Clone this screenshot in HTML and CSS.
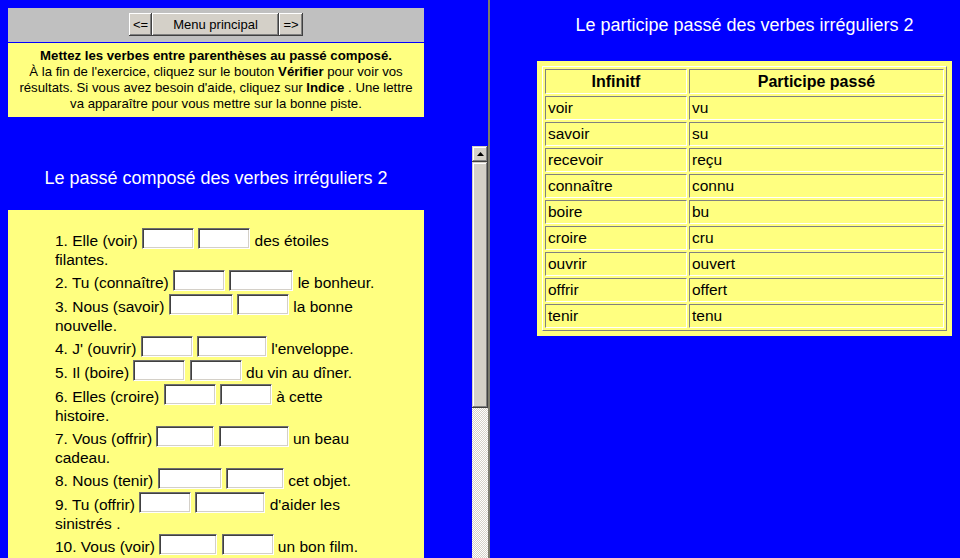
FILE: index.html
```html
<!DOCTYPE html>
<html lang="fr">
<head>
<meta charset="utf-8">
<title>Le passé composé des verbes irréguliers 2</title>
<link rel="stylesheet" href="styles.css">
</head>
<body>
<div class="frames">
  <div class="left">
    <div class="top-frame">
      <div class="nav">
        <button class="btn b-prev">&lt;=</button><button class="btn b-menu">Menu principal</button><button class="btn b-next">=&gt;</button>
      </div>
      <div class="consigne">
        <b>Mettez les verbes entre parenthèses au passé composé.</b><br>
        À la fin de l'exercice, cliquez sur le bouton <b>Vérifier</b> pour voir vos<br>
        résultats. Si vous avez besoin d'aide, cliquez sur <b>Indice</b> . Une lettre<br>
        va apparaître pour vous mettre sur la bonne piste.
      </div>
    </div>
    <div class="bottom-frame">
      <div class="exercise">
        <h1 class="title">Le passé composé des verbes irréguliers 2</h1>
        <div class="card">
          <p class="item">1. Elle (voir) <input class="w52"> <input class="w52"> des étoiles<br>filantes.</p>
          <p class="item">2. Tu (connaître) <input class="w52"> <input class="w64"> le bonheur.</p>
          <p class="item">3. Nous (savoir) <input class="w64"> <input class="w52"> la bonne<br>nouvelle.</p>
          <p class="item">4. J' (ouvrir) <input class="w52"> <input class="w70"> l'enveloppe.</p>
          <p class="item">5. Il (boire) <input class="w52"> <input class="w52"> du vin au dîner.</p>
          <p class="item">6. Elles (croire) <input class="w52"> <input class="w52"> à cette<br>histoire.</p>
          <p class="item">7. Vous (offrir) <input class="w58"> <input class="w70"> un beau<br>cadeau.</p>
          <p class="item">8. Nous (tenir) <input class="w64"> <input class="w58"> cet objet.</p>
          <p class="item">9. Tu (offrir) <input class="w52"> <input class="w70"> d'aider les<br>sinistrés .</p>
          <p class="item">10. Vous (voir) <input class="w58"> <input class="w52"> un bon film.</p>
        </div>
      </div>
      <div class="scrollbar">
        <div class="sb-btn"><svg width="7" height="4" viewBox="0 0 7 4"><polygon points="3.5,0 7,4 0,4" fill="#000"/></svg></div>
        <div class="sb-thumb"></div>
        <div class="sb-track"></div>
      </div>
    </div>
  </div>
  <div class="divider"></div>
  <div class="right">
    <div class="right-inner">
      <h2 class="title">Le participe passé des verbes irréguliers 2</h2>
      <div class="table-box">
        <table class="verbs">
          <tr><th class="c1">Infinitf</th><th>Participe passé</th></tr>
          <tr><td class="c1">voir</td><td>vu</td></tr>
          <tr><td class="c1">savoir</td><td>su</td></tr>
          <tr><td class="c1">recevoir</td><td>reçu</td></tr>
          <tr><td class="c1">connaître</td><td>connu</td></tr>
          <tr><td class="c1">boire</td><td>bu</td></tr>
          <tr><td class="c1">croire</td><td>cru</td></tr>
          <tr><td class="c1">ouvrir</td><td>ouvert</td></tr>
          <tr><td class="c1">offrir</td><td>offert</td></tr>
          <tr><td class="c1">tenir</td><td>tenu</td></tr>
        </table>
      </div>
    </div>
  </div>
</div>
</body>
</html>
```
FILE: styles.css
```css
* { box-sizing: border-box; }
html, body {
  margin: 0;
  padding: 0;
  background: #0000ff;
  font-family: "Liberation Sans", Arial, sans-serif;
  color: #000;
}
.frames {
  display: flex;
  width: 960px;
  height: 558px;
  overflow: hidden;
}
.left {
  width: 488px;
  flex: none;
  display: flex;
  flex-direction: column;
}
.top-frame {
  height: 146px;
  flex: none;
  padding: 8px;
}
.nav {
  width: 416px;
  height: 34px;
  background: #c0c0c0;
  display: flex;
  justify-content: center;
  padding-top: 5px;
}
.btn {
  height: 23px;
  margin: 0;
  padding: 0;
  border: none;
  background: #d4d0c8;
  font-family: "Liberation Sans", Arial, sans-serif;
  font-size: 13px;
  color: #000;
  box-shadow: inset -1px -1px 0 #404040, inset 1px 1px 0 #ffffff, inset -2px -2px 0 #808080, inset 2px 2px 0 #d4d0c8;
}
.b-prev { width: 23px; }
.b-menu { width: 127px; }
.b-next { width: 24px; }
.consigne {
  width: 416px;
  height: 74px;
  margin-top: 1px;
  background: #ffff80;
  padding: 5px 2px;
  font-size: 13.2px;
  line-height: 16px;
  text-align: center;
  white-space: nowrap;
}
.bottom-frame {
  flex: 1;
  display: flex;
  overflow: hidden;
}
.exercise {
  width: 472px;
  flex: none;
  overflow: hidden;
  padding: 22px 8px 0 8px;
}
.title {
  margin: 0;
  font-size: 18px;
  font-weight: normal;
  line-height: 21px;
  color: #fff;
  text-align: center;
}
.exercise .title { width: 416px; }
.card {
  margin-top: 21px;
  width: 416px;
  background: #ffff80;
  padding: 17px 40px 40px 47px;
}
.item {
  margin: 0;
  font-size: 15.5px;
  line-height: 18px;
  white-space: nowrap;
}
.item input {
  height: 21px;
  margin: 1px 0 2px 0;
  padding: 1px 2px;
  vertical-align: 3px;
  font-family: "Liberation Sans", Arial, sans-serif;
  font-size: 13px;
  background: #fff;
  border: 1px solid;
  border-color: #6f6f6f #ffffff #ffffff #6f6f6f;
  box-shadow: inset 1px 1px 0 #404040, inset -1px -1px 0 #d4d0c8;
  outline: none;
}
.w52 { width: 52px; }
.w58 { width: 58px; }
.w64 { width: 64px; }
.w70 { width: 70px; }
.scrollbar {
  width: 16px;
  flex: none;
  display: flex;
  flex-direction: column;
}
.sb-btn, .sb-thumb {
  background: #d4d0c8;
  box-shadow: inset -1px -1px 0 #404040, inset 1px 1px 0 #d4d0c8, inset -2px -2px 0 #808080, inset 2px 2px 0 #ffffff;
}
.sb-btn {
  height: 16px;
  display: flex;
  align-items: center;
  justify-content: center;
}
.sb-btn svg { display: block; margin-top: -1px; }
.sb-thumb { height: 246px; }
.sb-track {
  flex: 1;
  background-color: #ffffff;
  background-image: repeating-conic-gradient(#d4d0c8 0 25%, #ffffff 0 50%);
  background-size: 2px 2px;
}
.divider {
  width: 2px;
  flex: none;
  background: #7a7a6e;
}
.right {
  flex: 1;
  padding-top: 15px;
}
.right-inner {
  margin-left: 47px;
  width: 415px;
}
.right .title { margin-bottom: 25px; }
.table-box {
  background: #ffff80;
  padding: 5px;
}
.verbs {
  width: 405px;
  table-layout: fixed;
  border-collapse: separate;
  border-spacing: 2px;
  border: 1px solid;
  border-color: #ffffff #808080 #808080 #ffffff;
  font-size: 15.5px;
  line-height: 18px;
}
.verbs th, .verbs td {
  border: 1px solid;
  border-color: #808080 #ffffff #ffffff #808080;
  padding: 2px 2px;
  height: 24px;
  text-align: left;
  white-space: nowrap;
}
.verbs th {
  height: 25px;
  text-align: center;
  font-weight: bold;
  font-size: 16px;
  padding-top: 3px;
}
.verbs .c1 { width: 142px; }
```
